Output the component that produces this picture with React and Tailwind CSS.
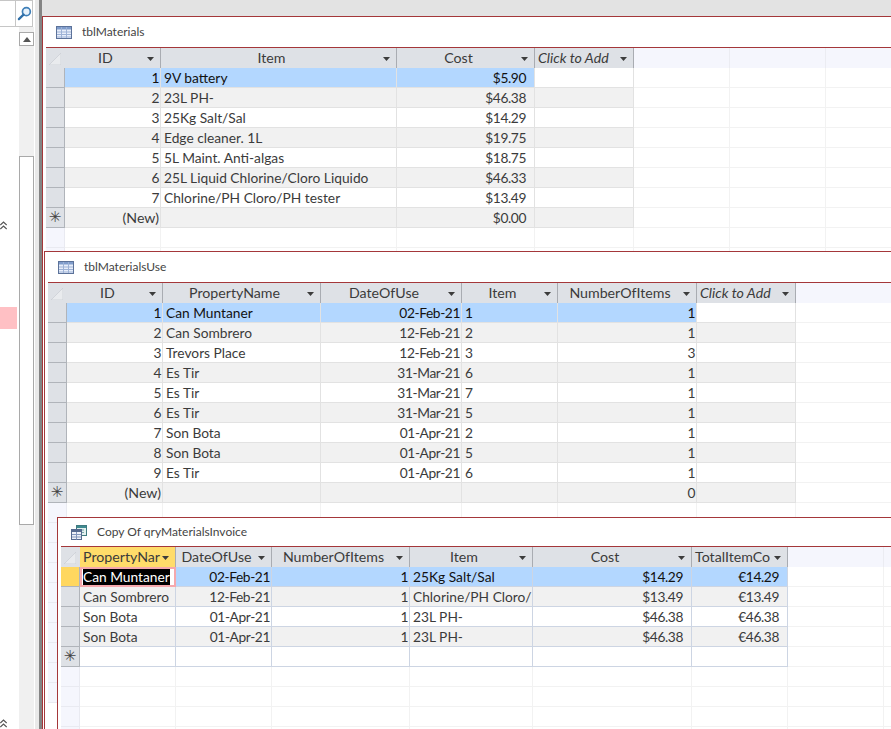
import React from "react";

const font = "font-['Lato','Liberation_Sans',sans-serif]";

const materials = {
  columns: [
    { name: "ID", w: "w-[96px]", cell: "num" },
    { name: "Item", w: "w-[236px]", cell: "text" },
    { name: "Cost", w: "w-[138px]", cell: "money" },
    { name: "Click to Add", w: "w-[99px]", cell: "text", add: true },
  ],
  rows: [
    ["1", "9V battery", "$5.90", ""],
    ["2", "23L PH-", "$46.38", ""],
    ["3", "25Kg Salt/Sal", "$14.29", ""],
    ["4", "Edge cleaner. 1L", "$19.75", ""],
    ["5", "5L Maint. Anti-algas", "$18.75", ""],
    ["6", "25L Liquid Chlorine/Cloro Liquido", "$46.33", ""],
    ["7", "Chlorine/PH Cloro/PH tester", "$13.49", ""],
  ],
  newRow: ["(New)", "", "$0.00", ""],
};

const materialsUse = {
  columns: [
    { name: "ID", w: "w-[96px]", cell: "num" },
    { name: "PropertyName", w: "w-[158px]", cell: "text" },
    { name: "DateOfUse", w: "w-[141px]", cell: "num" },
    { name: "Item", w: "w-[96px]", cell: "text" },
    { name: "NumberOfItems", w: "w-[139px]", cell: "num" },
    { name: "Click to Add", w: "w-[99px]", cell: "text", add: true },
  ],
  rows: [
    ["1", "Can Muntaner", "02-Feb-21", "1", "1", ""],
    ["2", "Can Sombrero", "12-Feb-21", "2", "1", ""],
    ["3", "Trevors Place", "12-Feb-21", "3", "3", ""],
    ["4", "Es Tir", "31-Mar-21", "6", "1", ""],
    ["5", "Es Tir", "31-Mar-21", "7", "1", ""],
    ["6", "Es Tir", "31-Mar-21", "5", "1", ""],
    ["7", "Son Bota", "01-Apr-21", "2", "1", ""],
    ["8", "Son Bota", "01-Apr-21", "5", "1", ""],
    ["9", "Es Tir", "01-Apr-21", "6", "1", ""],
  ],
  newRow: ["(New)", "", "", "", "0", ""],
};

const invoice = {
  columns: [
    { name: "PropertyNar", w: "w-[96px]", cell: "text", left: true },
    { name: "DateOfUse", w: "w-[96px]", cell: "num" },
    { name: "NumberOfItems", w: "w-[138px]", cell: "num" },
    { name: "Item", w: "w-[123px]", cell: "text" },
    { name: "Cost", w: "w-[159px]", cell: "money" },
    { name: "TotalItemCo", w: "w-[96px]", cell: "money", left: true },
  ],
  rows: [
    ["Can Muntaner", "02-Feb-21", "1", "25Kg Salt/Sal", "$14.29", "€14.29"],
    ["Can Sombrero", "12-Feb-21", "1", "Chlorine/PH Cloro/", "$13.49", "€13.49"],
    ["Son Bota", "01-Apr-21", "1", "23L PH-", "$46.38", "€46.38"],
    ["Son Bota", "01-Apr-21", "1", "23L PH-", "$46.38", "€46.38"],
  ],
  newRow: ["", "", "", "", "", ""],
};

function TableIcon() {
  return (
    <svg width="16" height="13" viewBox="0 0 16 13" className="shrink-0">
      <rect x="0.5" y="0.5" width="15" height="12" fill="#e8eefa" stroke="#5c7299" />
      <rect x="1" y="1" width="14" height="2.5" fill="#7f9ccb" />
      <path d="M1 6h14M1 8.500h14M1 11h14M5.500 1v11M10.500 1v11" stroke="#9db2d6" strokeWidth="1" fill="none" />
    </svg>
  );
}

function QueryIcon() {
  return (
    <svg width="16" height="15" viewBox="0 0 16 15" className="shrink-0">
      <rect x="5.500" y="0.500" width="10" height="10" fill="#e4f0ee" stroke="#3f7a80" />
      <rect x="6" y="1" width="9" height="2" fill="#3f8a90" />
      <path d="M8 5h5M8 7.500h5" stroke="#7aa7ab" />
      <rect x="0.500" y="4.500" width="10" height="10" fill="#eef1f8" stroke="#566a8f" />
      <rect x="1" y="5" width="9" height="2" fill="#566a8f" />
      <path d="M1 9.500h9M1 12h9M5.500 7v7.500" stroke="#8397bc" fill="none" />
    </svg>
  );
}

function SortArrow() {
  return (
    <svg width="7" height="4" viewBox="0 0 7 4" className="shrink-0 mt-[1px]">
      <path d="M0 0h7L3.500 4z" fill="#3c3c3c" />
    </svg>
  );
}

function Corner() {
  return (
    <svg width="12" height="12" viewBox="0 0 12 12" className="absolute left-[3px] bottom-[3px]">
      <path d="M12 0L0 12h12z" fill="#e9ebee" stroke="#c9ccd2" strokeWidth="0.7" />
    </svg>
  );
}

function HeaderCell({ col, active }) {
  return (
    <div
      className={`${col.w} h-5 shrink-0 flex items-center border-r border-[#a9acb2] pr-[6px] ${
        active ? "bg-[#ffdc6a]" : "bg-[#dee1e6]"
      }`}
    >
      <span
        className={`flex-1 min-w-0 overflow-hidden whitespace-nowrap pr-[1px] ${
          col.left ? "pl-[3px] text-left" : "text-center"
        } ${col.add ? "italic pl-[3px] !text-left" : ""}`}
      >
        {col.name}
      </span>
      <SortArrow />
    </div>
  );
}

function Cell({ col, value, query, selected, editing, plain }) {
  let align = "justify-end pr-[1px] text-[13.75px] tracking-[-0.4px]";
  if (col.cell === "text") align = "justify-start pl-[3px] text-[13.75px]";
  if (col.cell === "money") align = "justify-end pr-[8px] text-[13.75px] tracking-[-0.4px]";
  if (value === "(New)") align = "justify-end pr-[1px]";
  if (editing) {
    return (
      <div className={`${col.w} h-5 shrink-0 flex items-center bg-white border-2 border-[#f5a8ad] pl-[1px] text-[13.75px]`}>
        <span className="bg-black text-white whitespace-nowrap leading-[16px]">{value}</span>
      </div>
    );
  }
  return (
    <div
      className={`${col.w} h-5 shrink-0 flex items-center overflow-hidden whitespace-nowrap border-r border-b ${
        query ? "border-[#cdd5e3]" : "border-[#e2e2e2]"
      } ${selected ? "text-[#111]" : ""} ${plain ? "bg-white" : ""} ${align}`}
    >
      {value}
    </div>
  );
}

function SelectorCell({ kind }) {
  const bg = kind === "active" ? "bg-[#ffd75f]" : "bg-[#dee1e6]";
  return (
    <div className={`w-[19px] h-5 shrink-0 flex items-center justify-center border-r border-b border-[#b0b4ba] ${bg}`}>
      {kind === "new" && <span className="text-[15px] leading-none text-[#444] font-['DejaVu_Sans',sans-serif]">✳</span>}
    </div>
  );
}

function ExtraCols() {
  return (
    <>
      <div className="w-24 h-5 shrink-0 border-r border-b border-[#f2f2f2]" />
      <div className="w-24 h-5 shrink-0 border-r border-b border-[#f2f2f2]" />
      <div className="w-24 h-5 shrink-0 border-r border-b border-[#f2f2f2]" />
    </>
  );
}

function BlankRows({ columns, count }) {
  return Array.from({ length: count }).map((_, i) => (
    <div key={i} className="flex h-5">
      <div className="w-[19px] shrink-0 bg-[#f5f6fd] border-r border-b border-[#e9eaf1]" />
      {columns.map((c) => (
        <div key={c.name} className={`${c.w} shrink-0 border-r border-b border-[#f2f2f2]`} />
      ))}
      <ExtraCols />
    </div>
  ));
}

function Datagrid({ data, query, blank }) {
  const { columns, rows, newRow } = data;
  return (
    <div className="ml-[3px] border-t border-[#a4373a] text-[14.2px] leading-5 text-[#3b3b3b]">
      {/* header */}
      <div className="flex h-5 bg-[#f5f6fd]">
        <div className="relative w-[19px] h-5 shrink-0 bg-[#dee1e6]">
          <Corner />
        </div>
        {columns.map((c, i) => (
          <HeaderCell key={c.name} col={c} active={query && i === 0} />
        ))}
        <div className="w-24 shrink-0 border-r border-[#ebecf2]" />
        <div className="w-24 shrink-0 border-r border-[#ebecf2]" />
        <div className="w-24 shrink-0 border-r border-[#ebecf2]" />
      </div>
      {/* rows */}
      {rows.map((row, r) => (
        <div key={r} className="flex h-5">
          <SelectorCell kind={query && r === 0 ? "active" : "row"} />
          <div className={`flex ${r === 0 ? "bg-[#b3d7ff]" : r % 2 ? "bg-[#f1f1f1]" : "bg-white"}`}>
            {columns.map((c, i) => (
              <Cell
                key={c.name}
                col={c}
                value={row[i]}
                query={query}
                selected={r === 0}
                plain={r === 0 && c.add}
                editing={query && r === 0 && i === 0}
              />
            ))}
          </div>
          <ExtraCols />
        </div>
      ))}
      <div className="flex h-5">
        <SelectorCell kind="new" />
        <div className={`flex ${query ? "bg-white" : rows.length % 2 ? "bg-[#f1f1f1]" : "bg-white"}`}>
          {columns.map((c, i) => (
            <Cell key={c.name} col={c} value={newRow[i]} query={query} />
          ))}
        </div>
        <ExtraCols />
      </div>
      <BlankRows columns={columns} count={blank} />
    </div>
  );
}

function SubWindow({ title, icon, position, titleHeight, data, query, blank }) {
  return (
    <div className={`absolute ${position} w-[900px] bg-white border-l-[1.5px] border-t border-[#a4373a] overflow-hidden`}>
      <div className={`${titleHeight} flex items-center gap-[10px] pl-[13px] text-[12px] text-[#444]`}>
        {icon}
        <span>{title}</span>
      </div>
      <Datagrid data={data} query={query} blank={blank} />
    </div>
  );
}

function Chevrons({ className }) {
  return (
    <svg width="7" height="9" viewBox="0 0 7 9" className={`block ${className}`}>
      <path d="M0.300 4L3.500 1l3.200 3M0.300 8L3.500 5l3.200 3" fill="none" stroke="#555" strokeWidth="1.200" />
    </svg>
  );
}

function Sidebar() {
  return (
    <div className="w-[39px] h-full shrink-0 flex bg-white">
      <div className="w-[35px] shrink-0 flex flex-col">
        {/* search box */}
        <div className="w-[33px] h-[27px] shrink-0 flex border-t border-b border-r border-[#c6c6c6]">
          <div className="w-4 border-r border-[#c6c6c6]" />
          <div className="flex-1 flex items-center justify-center">
            <svg width="15" height="15" viewBox="0 0 16 16">
              <circle cx="10" cy="6" r="4.200" fill="#e8f2fb" stroke="#3f7fb8" strokeWidth="1.800" />
              <path d="M7 9.200L2 14" stroke="#2f6fa8" strokeWidth="2.400" strokeLinecap="round" />
            </svg>
          </div>
        </div>
        <div className="flex-1 flex">
          {/* navigation pane content */}
          <div className="w-[19px] shrink-0">
            <Chevrons className="mt-[194px]" />
            <div className="mt-[77px] w-[17px] h-[22px] bg-[#ffc0c4]" />
            <Chevrons className="mt-[390px]" />
          </div>
          {/* scrollbar */}
          <div className="w-[15px] shrink-0 bg-[#f0f0f0] pt-[5px]">
            <div className="h-[14px] bg-white border border-[#a9a9a9] flex items-center justify-center">
              <div className="w-0 h-0 border-x-[4px] border-x-transparent border-b-[5px] border-b-[#555]" />
            </div>
            <div className="mt-[110px] h-[369px] bg-white border border-[#a9a9a9]" />
          </div>
        </div>
      </div>
      <div className="w-[4px] shrink-0 bg-[#e9e9e9]" />
    </div>
  );
}

export default function App() {
  return (
    <div className={`${font} w-[891px] h-[729px] overflow-hidden flex bg-[#e3e3e3]`}>
      <Sidebar />
      <div className="w-[3px] h-full shrink-0 bg-[#848484]" />
      <div className="relative flex-1 min-w-0 h-full">
        <SubWindow
          title="tblMaterials"
          icon={<TableIcon />}
          position="left-0 top-[16px] h-[760px]"
          titleHeight="h-[30px]"
          data={materials}
          blank={26}
        />
        <SubWindow
          title="tblMaterialsUse"
          icon={<TableIcon />}
          position="left-[2px] top-[251px] h-[500px]"
          titleHeight="h-[30px]"
          data={materialsUse}
          blank={10}
        />
        <SubWindow
          title="Copy Of qryMaterialsInvoice"
          icon={<QueryIcon />}
          position="left-[15px] top-[517px] h-[240px]"
          titleHeight="h-[28px]"
          data={invoice}
          query
          blank={5}
        />
      </div>
    </div>
  );
}
